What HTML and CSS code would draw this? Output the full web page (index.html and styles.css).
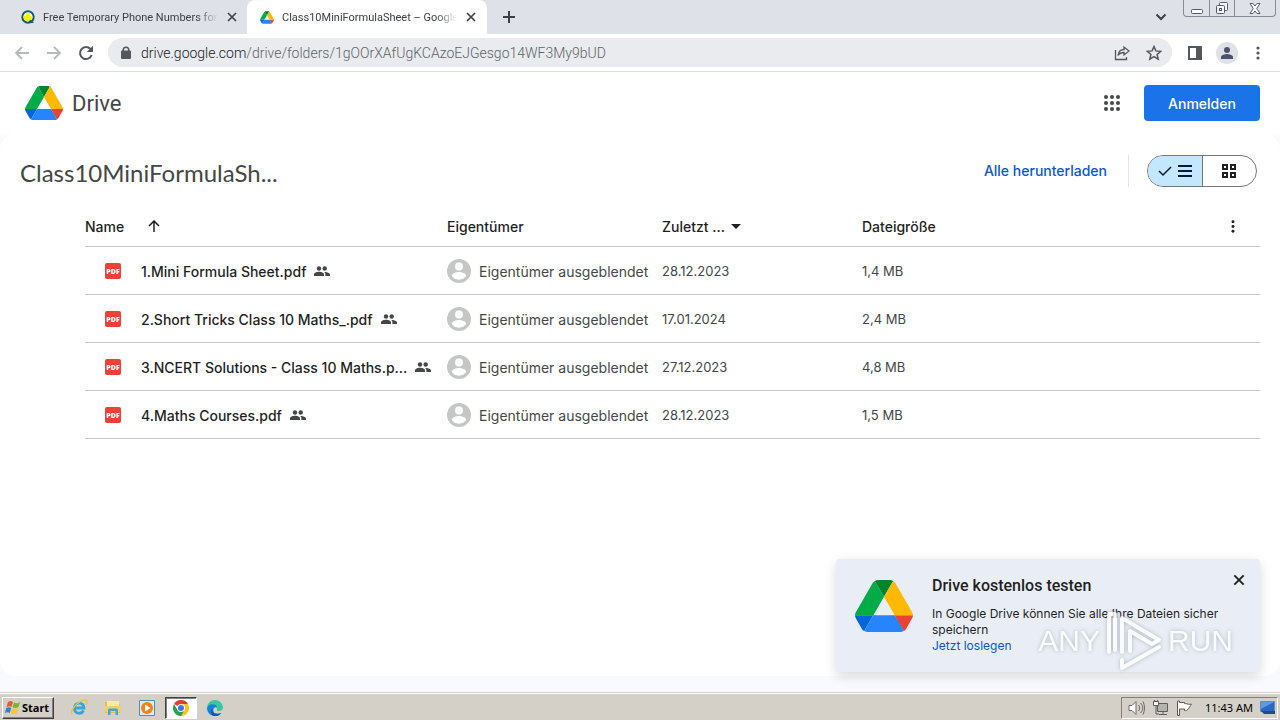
FILE: index.html
```html
<!DOCTYPE html>
<html lang="de">
<head>
<meta charset="utf-8">
<title>Class10MiniFormulaSheet – Google Drive</title>
<link rel="stylesheet" href="styles.css">
</head>
<body>
<svg class="defs" aria-hidden="true">
  <symbol id="drive" viewBox="0 0 87.3 78">
    <path fill="#0066da" d="m6.6 66.85 3.85 6.65c.8 1.4 1.95 2.5 3.3 3.3l13.75-23.8h-27.5c0 1.55.4 3.1 1.2 4.5z"/>
    <path fill="#00ac47" d="m43.65 25-13.75-23.8c-1.35.8-2.5 1.9-3.3 3.3l-25.4 44a9.06 9.06 0 0 0 -1.2 4.5h27.5z"/>
    <path fill="#ea4335" d="m73.55 76.8c1.35-.8 2.5-1.9 3.3-3.3l1.6-2.75 7.65-13.25c.8-1.4 1.2-2.95 1.2-4.5h-27.5l5.85 11.5z"/>
    <path fill="#00832d" d="m43.65 25 13.75-23.8c-1.35-.8-2.9-1.2-4.5-1.2h-18.5c-1.6 0-3.15.45-4.5 1.2z"/>
    <path fill="#2684fc" d="m59.8 53h-32.3l-13.75 23.8c1.35.8 2.9 1.2 4.5 1.2h50.8c1.6 0 3.15-.45 4.5-1.2z"/>
    <path fill="#ffba00" d="m73.4 26.5-12.7-22c-.8-1.4-1.95-2.5-3.3-3.3l-13.75 23.8 16.15 28h27.45c0-1.55-.4-3.1-1.2-4.5z"/>
  </symbol>
  <symbol id="close" viewBox="0 0 12 12"><path d="M2 2l8 8M10 2l-8 8" fill="none" stroke="currentColor" stroke-width="1.6"/></symbol>
  <symbol id="pdf" viewBox="0 0 16 16"><rect width="16" height="16" rx="2" fill="#ea4335"/><text x="8" y="10.5" text-anchor="middle" class="pdf-text">PDF</text></symbol>
  <symbol id="people" viewBox="0 0 16 10"><circle cx="5" cy="2.5" r="2.2"/><circle cx="10.7" cy="2.5" r="2.2"/><path d="M0 10V8.5C0 6.6 3 5.8 5 5.8s5 .8 5 2.7V10zM11 5.9c2.2.1 5 .9 5 2.6V10h-4.6V8.400c0-1-.4-1.800-1.200-2.400z"/></symbol>
  <symbol id="person" viewBox="0 0 20 20"><path fill-rule="evenodd" d="M10 0a10 10 0 1 0 0 20 10 10 0 0 0 0-20zm0 3a3.300 3.300 0 1 1 0 6.600A3.300 3.300 0 0 1 10 3zm0 14.200a7 7 0 0 1-6-3.200c0-2 4-3.100 6-3.100s6 1.100 6 3.100a7 7 0 0 1-6 3.200z"/></symbol>
  <symbol id="dots" viewBox="0 0 4 14"><circle cx="2" cy="2" r="1.6"/><circle cx="2" cy="7" r="1.6"/><circle cx="2" cy="12" r="1.6"/></symbol>
</svg>

<nav class="tabs" aria-label="Tabs">
  <div class="tab">
    <svg width="14" height="14" viewBox="0 0 14 14"><circle cx="7" cy="7" r="5.700" fill="#fff" stroke="#155a72" stroke-width="2"/><path d="M9 9l4 4H7z" fill="#155a72"/><path d="M2.500 8V6l2-.5 1-2.500 3.500.5v2.500l2.500.5-1 3-3 1.500H4.500z" fill="#f0f500"/></svg>
    <span class="tab-title">Free Temporary Phone Numbers for</span>
    <button class="icon" aria-label="Tab schließen"><svg width="12" height="12"><use href="#close"/></svg></button>
  </div>
  <div class="tab active">
    <svg width="14" height="13"><use href="#drive"/></svg>
    <span class="tab-title">Class10MiniFormulaSheet – Google D</span>
    <button class="icon" aria-label="Tab schließen"><svg width="12" height="12"><use href="#close"/></svg></button>
  </div>
  <button class="icon new-tab" aria-label="Neuer Tab"><svg width="12" height="12" viewBox="0 0 12 12"><path d="M6 0v12M0 6h12" stroke="currentColor" stroke-width="2"/></svg></button>
  <button class="icon tab-search" aria-label="Tabs suchen"><svg width="12" height="8" viewBox="0 0 12 8"><path d="M1.500 1.500L6 6l4.500-4.500" fill="none" stroke="currentColor" stroke-width="2"/></svg></button>
  <div class="window-buttons">
    <button aria-label="Minimieren"><svg width="12" height="14" viewBox="0 0 12 14"><rect x=".5" y="8.500" width="11" height="4" rx="1" fill="#fff" stroke="#555b66"/></svg></button>
    <button aria-label="Wiederherstellen"><svg width="14" height="14" viewBox="0 0 14 14" fill="#f5f6f8" stroke="#555b66"><rect x="4.500" y="1.500" width="8" height="8" rx="1"/><rect x="1.500" y="4.500" width="8" height="8" rx="1"/><rect x="4.500" y="7.500" width="2" height="2"/></svg></button>
    <button class="wide" aria-label="Schließen"><svg width="12" height="14" viewBox="0 0 12 14"><path d="M1 2.500h3l2 2.500 2-2.500h3L7.700 7.500l3.300 5H8L6 10l-2 2.500H1l3.300-5z" fill="#fff" stroke="#555b66"/></svg></button>
  </div>
</nav>

<div class="toolbar">
  <button class="icon faded" aria-label="Zurück"><svg width="16" height="16" viewBox="0 0 16 16"><path d="M15 8H2M8 2L2 8l6 6" fill="none" stroke="currentColor" stroke-width="1.800"/></svg></button>
  <button class="icon faded" aria-label="Vorwärts"><svg width="16" height="16" viewBox="0 0 16 16"><path d="M1 8h13M8 2l6 6-6 6" fill="none" stroke="currentColor" stroke-width="1.800"/></svg></button>
  <button class="icon" aria-label="Neu laden"><svg width="16" height="16" viewBox="0 0 16 16"><path d="M13.700 10A6 6 0 1 1 12.500 4" fill="none" stroke="currentColor" stroke-width="2"/><path d="M15 .8V7H8.800z"/></svg></button>
  <div class="address">
    <svg width="10" height="13" viewBox="0 0 10 13"><path fill-rule="evenodd" d="M1.500 4.500V4a3.500 3.500 0 0 1 7 0v.5H9a1 1 0 0 1 1 1V12a1 1 0 0 1-1 1H1a1 1 0 0 1-1-1V5.500a1 1 0 0 1 1-1zm1.500 0h4V4a2 2 0 0 0-4 0z"/></svg>
    <span class="url"><span class="host">drive.google.com</span>/drive/folders/1gOOrXAfUgKCAzoEJGesgo14WF3My9bUD</span>
    <button class="icon" aria-label="Teilen"><svg width="16" height="16" viewBox="0 0 16 16" fill="none" stroke="currentColor" stroke-width="1.300"><path d="M1.500 5v9.500h11V12"/><path d="M4 10.500c.5-4 2.500-6 6-6V2l5 4-5 4V7.500c-2.500 0-4.500.5-6 3z"/></svg></button>
    <button class="icon" aria-label="Lesezeichen"><svg width="16" height="16" viewBox="0 0 16 16"><path d="M8 1.500l1.900 4.400 4.800.4-3.600 3.200 1.100 4.700L8 11.700l-4.200 2.500 1.100-4.700-3.600-3.200 4.800-.4z" fill="none" stroke="currentColor" stroke-width="1.500"/></svg></button>
  </div>
  <button class="icon" aria-label="Seitenleiste"><svg width="14" height="14" viewBox="0 0 14 14"><path d="M1 1h12v12H1z" fill="none" stroke="currentColor" stroke-width="2"/><path d="M8 0h6v14H8z"/></svg></button>
  <button class="icon profile" aria-label="Profil"><svg width="12" height="12" viewBox="0 0 12 12"><circle cx="6" cy="3" r="3"/><path d="M0 12v-2c0-2 4-3 6-3s6 1 6 3v2z"/></svg></button>
  <button class="icon" aria-label="Menü"><svg width="4" height="14"><use href="#dots"/></svg></button>
</div>

<div class="page">
  <header class="app-header">
    <svg width="38" height="34"><use href="#drive"/></svg>
    <span class="brand">Drive</span>
    <button class="icon apps" aria-label="Google-Apps"><svg width="16" height="16" viewBox="0 0 16 16"><g id="r"><circle cx="2" cy="2" r="2"/><circle cx="8" cy="2" r="2"/><circle cx="14" cy="2" r="2"/></g><use href="#r" y="6"/><use href="#r" y="12"/></svg></button>
    <button class="sign-in">Anmelden</button>
  </header>

  <main class="content">
    <div class="folder-bar">
      <h1>Class10MiniFormulaSh...</h1>
      <button class="download">Alle herunterladen</button>
      <div class="view-switch">
        <button class="selected" aria-label="Listenlayout"><svg width="14" height="12" viewBox="0 0 14 12"><path d="M1 6l4 4 8-8" fill="none" stroke="currentColor" stroke-width="1.500"/></svg><svg width="14" height="12" viewBox="0 0 14 12"><path d="M0 1h14M0 6h14M0 11h14" stroke="currentColor" stroke-width="2"/></svg></button>
        <button aria-label="Rasterlayout"><svg width="14" height="14" viewBox="0 0 14 14" fill="none" stroke="currentColor" stroke-width="2"><path d="M1 1h4v4H1zM9 1h4v4H9zM1 9h4v4H1zM9 9h4v4H9z"/></svg></button>
      </div>
    </div>

    <table class="files">
      <colgroup><col class="c-name"><col class="c-owner"><col class="c-date"><col><col class="c-more"></colgroup>
      <thead>
        <tr>
          <th><span class="cell head-name">Name <svg width="12" height="12" viewBox="0 0 12 12"><path d="M6 12V1M1 6l5-5 5 5" fill="none" stroke="currentColor" stroke-width="1.500"/></svg></span></th>
          <th>Eigentümer</th>
          <th><span class="cell head-date">Zuletzt ... <svg width="10" height="5" viewBox="0 0 10 5"><path d="M0 0h10L5 5z"/></svg></span></th>
          <th>Dateigröße</th>
          <th><button class="icon" aria-label="Weitere Optionen"><svg width="4" height="13"><use href="#dots"/></svg></button></th>
        </tr>
      </thead>
      <tbody>
        <tr>
          <td><span class="cell file"><svg width="16" height="16"><use href="#pdf"/></svg><span class="file-name">1.Mini Formula Sheet.pdf</span><svg class="shared" width="16" height="10"><use href="#people"/></svg></span></td>
          <td><span class="cell owner"><svg width="24" height="24"><use href="#person"/></svg>Eigentümer ausgeblendet</span></td>
          <td class="value">28.12.2023</td><td class="value">1,4 MB</td><td></td>
        </tr>
        <tr>
          <td><span class="cell file"><svg width="16" height="16"><use href="#pdf"/></svg><span class="file-name">2.Short Tricks Class 10 Maths_.pdf</span><svg class="shared" width="16" height="10"><use href="#people"/></svg></span></td>
          <td><span class="cell owner"><svg width="24" height="24"><use href="#person"/></svg>Eigentümer ausgeblendet</span></td>
          <td class="value">17.01.2024</td><td class="value">2,4 MB</td><td></td>
        </tr>
        <tr>
          <td><span class="cell file"><svg width="16" height="16"><use href="#pdf"/></svg><span class="file-name">3.NCERT Solutions - Class 10 Maths.p...</span><svg class="shared" width="16" height="10"><use href="#people"/></svg></span></td>
          <td><span class="cell owner"><svg width="24" height="24"><use href="#person"/></svg>Eigentümer ausgeblendet</span></td>
          <td class="value">27.12.2023</td><td class="value">4,8 MB</td><td></td>
        </tr>
        <tr>
          <td><span class="cell file"><svg width="16" height="16"><use href="#pdf"/></svg><span class="file-name">4.Maths Courses.pdf</span><svg class="shared" width="16" height="10"><use href="#people"/></svg></span></td>
          <td><span class="cell owner"><svg width="24" height="24"><use href="#person"/></svg>Eigentümer ausgeblendet</span></td>
          <td class="value">28.12.2023</td><td class="value">1,5 MB</td><td></td>
        </tr>
      </tbody>
    </table>
  </main>

  <aside class="promo">
    <svg width="58" height="54"><use href="#drive"/></svg>
    <div class="promo-body">
      <h2>Drive kostenlos testen</h2>
      <p>In Google Drive können Sie alle Ihre Dateien sicher speichern</p>
      <a href="#start">Jetzt loslegen</a>
    </div>
    <button class="icon promo-close" aria-label="Schließen"><svg width="14" height="14"><use href="#close"/></svg></button>
  </aside>
  <div class="watermark"><span>ANY</span><svg width="58" height="62" viewBox="0 0 58 62" fill="none" stroke="#fff" stroke-width="4" stroke-linejoin="round" stroke-linecap="round"><path d="M4 42V4h6v36M17 42V8l37 22-7 4L25 21v20M17 50v8l37-21"/></svg><span>RUN</span></div>
</div>

<footer class="taskbar">
  <button class="start"><svg width="16" height="15" viewBox="0 0 16 15"><path d="M3 2c2-1.500 3.500-1 5 0L6.500 7C5 6 3.500 6 1.500 7z" fill="#e8582c"/><path d="M9 2.500c2 1 4 1 6-.5l-1.500 5c-2 1.300-4 1.300-6 .2z" fill="#76b82a"/><path d="M1.200 8c2-1.200 3.500-1 5 0l-1.400 5C3.500 12 2 12 0 13z" fill="#2f83d6"/><path d="M7.200 8.500c2 1 4 1 6-.3l-1.400 5c-2 1.200-4 1.200-6 .1z" fill="#fbc62c"/></svg>Start</button>
  <div class="launchers">
    <button aria-label="Internet Explorer"><svg width="18" height="17" viewBox="0 0 18 17" fill="none"><path d="M4.500 9h9.500c0-6.500-9.500-6.500-9.500 0s7 6.500 9 2.500" stroke="#35a6dd" stroke-width="2.800"/><path d="M2 15.500C-1 11 11-1 16.500 1.500c1.500 1 .3 3-.5 4" stroke="#eec33b" stroke-width="1.400"/></svg></button>
    <button aria-label="Explorer"><svg width="18" height="17" viewBox="0 0 18 17"><path d="M1 3h6l1 2h8v9H1z" fill="#e5bd4c"/><path d="M3 2h12v5H3z" fill="#fae9a7"/><path d="M1 7h16v6H1z" fill="#f0d06a"/><path d="M4 16v-5q0-1.500 1.500-1.500h7q1.500 0 1.500 1.500v5h-2.500v-4h-5v4z" fill="#4ba3d2"/></svg></button>
    <button aria-label="Media Player"><svg width="16" height="16" viewBox="0 0 16 16"><path d="M.5.500h15v15H.5z" fill="#d8edf8" stroke="#4a91c0"/><circle cx="8" cy="8" r="6" fill="#f58213"/><path d="M6 4.500v7L11.500 8z" fill="#fff"/></svg></button>
    <button class="running" aria-label="Google Chrome"><svg width="16" height="16" viewBox="0 0 16 16"><path d="M8 8L1.070 4A8 8 0 0 1 14.930 4z" fill="#e33b2e"/><path d="M8 8V4h6.930A8 8 0 0 1 8 16z" fill="#fcc31e"/><path d="M8 8v0L8 16A8 8 0 0 1 1.070 4L4.500 10z" fill="#2da04c"/><path d="M4.500 10L8 16 11 11z" fill="#2da04c"/><circle cx="8" cy="8" r="4" fill="#fff"/><circle cx="8" cy="8" r="3" fill="#3b78e7"/></svg></button>
    <button aria-label="Microsoft Edge"><svg width="16" height="16" viewBox="0 0 16 16"><path d="M8 0a8 8 0 0 1 8 7c0 3-2 4-4.500 4-1.500 0-2-1-1.500-2C10 6 5 4 0 8a8 8 0 0 1 8-8z" fill="#3cc6a0"/><path d="M0 8c1-5 10-5 10-.5C5 6 4.500 15 12 13.500l2-.5c-2 3-5 3.500-7.500 3A8 8 0 0 1 0 8z" fill="#1681d5"/><path d="M6 8c-2 4 1 7.500 8 5-2 3-5 3.500-7.500 3C3 14 3 10 6 8z" fill="#1458a8"/></svg></button>
  </div>
  <div class="tray">
    <svg width="17" height="16" viewBox="0 0 17 16" fill="none" stroke="#6b6a66"><path d="M1 5.500h3l4-4v13l-4-4H1z" fill="#fff"/><path d="M10.500 5c1.500 2 1.500 4 0 6M12.500 3c3 3 3 7 0 10M15 1.500c2 4 2 9 0 13"/></svg>
    <svg width="17" height="16" viewBox="0 0 17 16" fill="none" stroke="#5e5d5a"><path d="M5.500 3.500h10v8h-10z" fill="#b5b3af"/><path d="M1.500 1.500h5v4h-5z" fill="#fff"/><path d="M7 14.500h8M11 12v2M4 6v8h3M2.500 0v2M5.500 0v2"/></svg>
    <svg width="17" height="16" viewBox="0 0 17 16" fill="#fff" stroke="#5e5d5a"><path d="M1.500 1v14.500h2V9h5v1.500c3 1 4-2 7-6.500-3 1-4-.5-7-.5v-1h-5V1z"/></svg>
    <time>11:43 AM</time>
    <svg width="15" height="13" viewBox="0 0 15 13"><path d="M.5.500h14v10H.5z" fill="#2b68bf" stroke="#5d8cc7"/><path d="M1 1h13L1 8z" fill="#5a9be0"/><path d="M1 10h14v3H4z" fill="#214c88"/></svg>
  </div>
</footer>
</body>
</html>
```
FILE: styles.css
```css
* { box-sizing: border-box; }

body {
  margin: 0;
  min-height: 100vh;
  display: flex;
  flex-direction: column;
  font-family: Inter, "Open Sans", sans-serif;
  font-size: 14px;
  color: #1f1f1f;
  background: #fff;
}

svg { flex: none; display: block; }
svg:not([fill]) { fill: currentColor; }
.defs { position: absolute; width: 0; height: 0; }
button { font: inherit; color: inherit; border: 0; padding: 0; background: none; }
.icon { display: flex; align-items: center; justify-content: center; flex: none; }

/* Browser tabs */
.tabs {
  display: flex;
  height: 34px;
  background: #dee1e8;
  color: #3c4043;
  font-family: Roboto, sans-serif;
  font-size: 11px;
}
.tab {
  display: flex;
  align-items: center;
  gap: 8px;
  width: 247px;
  padding: 0 9px 0 21px;
}
.tab.active {
  width: 240px;
  padding: 0 10px 0 13px;
  background: #fff;
  border-radius: 8px 8px 0 0;
}
.tab-title {
  flex: 1;
  min-width: 0;
  overflow: hidden;
  white-space: nowrap;
  mask-image: linear-gradient(to right, #000 88%, transparent);
}
.new-tab { width: 44px; }
.tab-search { margin-left: auto; width: 44px; }
.window-buttons {
  display: flex;
  align-self: flex-start;
  margin-right: 4px;
  border: 1px solid #858b98;
  border-top: 0;
  border-radius: 0 0 4px 4px;
}
.window-buttons button {
  width: 25px;
  height: 16px;
  display: flex;
  align-items: center;
  justify-content: center;
}
.window-buttons button + button { border-left: 1px solid #858b98; }
.window-buttons .wide { width: 41px; }

/* Address bar */
.toolbar {
  display: flex;
  align-items: center;
  gap: 16px;
  height: 38px;
  padding: 0 20px 0 14px;
  border-bottom: 1px solid #dadce0;
  color: #54575b;
}
.faded { color: #b7b9bc; }
.address {
  flex: 1;
  min-width: 0;
  display: flex;
  align-items: center;
  gap: 16px;
  height: 29px;
  margin-left: -2px;
  padding: 0 10px 0 13px;
  border-radius: 15px;
  background: #e9ebee;
}
.url {
  flex: 1;
  min-width: 0;
  margin-left: -6px;
  overflow: hidden;
  white-space: nowrap;
  font-family: Roboto, sans-serif;
  font-weight: 300;
  color: #5f6368;
}
.host { color: #202124; }
.profile {
  width: 22px;
  height: 22px;
  margin: 0 2px 0 -2px;
  border-radius: 50%;
  background: #dee1e6;
  color: #4a5470;
}

/* Drive page */
.page {
  flex: 1;
  position: relative;
  display: flex;
  flex-direction: column;
  padding-bottom: 16px;
  background: linear-gradient(#fff 60px, #f8fafd 66px);
}
.app-header {
  display: flex;
  align-items: center;
  height: 62px;
  padding: 0 20px 0 25px;
}
.brand { margin-left: 9px; font-size: 22px; color: #444746; font-family: Roboto, sans-serif; }
.apps { margin-left: auto; color: #444746; }
.sign-in {
  width: 116px;
  height: 36px;
  margin-left: 24px;
  border-radius: 4px;
  background: #1a73e8;
  color: #fff;
  font-weight: 500;
}
.content {
  flex: 1;
  padding: 16px 20px 0;
  border-radius: 16px;
  background: #fff;
}
.folder-bar { display: flex; align-items: flex-start; height: 44px; padding-top: 5px; }
h1 {
  margin: 0 auto 0 0;
  font-family: Lato, sans-serif;
  font-size: 24px;
  line-height: 36px;
  font-weight: 400;
  color: #444746;
}
.download {
  height: 32px;
  padding: 0 21px 2px 0;
  border-right: 1px solid #e3e3e3;
  color: #0b57d0;
  font-weight: 500;
}
.view-switch {
  display: flex;
  width: 110px;
  height: 32px;
  margin: 0 3px 0 18px;
  overflow: hidden;
  border: 1px solid #747775;
  border-radius: 16px;
}
.view-switch button {
  flex: 1;
  display: flex;
  align-items: center;
  justify-content: center;
  gap: 6px;
}
.view-switch .selected { background: #c2e7ff; border-right: 1px solid #747775; color: #001d35; }

.files {
  width: calc(100% - 65px);
  margin: 13px 0 0 65px;
  table-layout: fixed;
  border-collapse: collapse;
}
.c-name { width: 362px; }
.c-owner { width: 215px; }
.c-date { width: 200px; }
.c-more { width: 52px; }
.files th, .files td {
  height: 48px;
  padding: 2px 0 0;
  border-bottom: 1px solid #c7c7c7;
  text-align: left;
  white-space: nowrap;
  font-weight: 400;
  color: #444746;
}
.files th { height: 39px; padding: 0; font-weight: 500; color: #1f1f1f; }
.files th .icon { margin-left: 23px; }
.files .value { font-size: 13px; }
.cell { display: flex; align-items: center; }
.head-name { gap: 24px; }
.head-date { gap: 6px; }
.file { padding-left: 20px; }
.file-name { margin: 0 8px 0 20px; font-weight: 500; color: #1f1f1f; }
.shared { color: #444746; }
.owner { gap: 8px; }
.owner svg { color: #c4c7c5; }
.pdf-text { fill: #fff; font: 800 7px "Open Sans", sans-serif; }

/* Promotion card */
.promo {
  position: absolute;
  right: 20px;
  bottom: 20px;
  width: 424px;
  height: 113px;
  display: flex;
  padding: 20px 14px 0 19px;
  border-radius: 4px;
  background: #e9eef6;
  box-shadow: 0 4px 12px rgba(60, 64, 67, .2);
}
.promo-body { flex: 1; margin-left: 19px; font-size: 12px; line-height: 16px; }
.promo h2 {
  margin: -3px 0 10px;
  font-family: Roboto, sans-serif;
  font-size: 16px;
  line-height: 20px;
  font-weight: 500;
}
.promo p { margin: 0; }
.promo a { color: #0b57d0; text-decoration: none; }
.promo-close { align-self: flex-start; margin-top: -6px; }

.watermark {
  position: absolute;
  right: 47px;
  bottom: 20px;
  display: flex;
  align-items: center;
  gap: 5px;
  color: #fff;
  font: 30px "Liberation Sans", sans-serif;
  opacity: .8;
  pointer-events: none;
  filter: drop-shadow(0 0 2px rgba(110, 115, 130, .6));
}

/* Windows taskbar */
.taskbar {
  display: flex;
  align-items: center;
  height: 28px;
  padding: 2px 2px 0 2px;
  border-top: 1px solid #d4d0c8;
  background: #d4d0c8;
  box-shadow: inset 0 1px #fff;
  color: #000;
  font-family: "Noto Sans", sans-serif;
  font-size: 11px;
}
.start {
  display: flex;
  align-items: center;
  gap: 1px;
  width: 52px;
  height: 22px;
  padding-left: 2px;
  border: 1px solid;
  border-color: #fff #404040 #404040 #fff;
  box-shadow: inset -1px -1px #808080;
  font-weight: 700;
}
.launchers { display: flex; gap: 2px; margin-left: 9px; }
.launchers button {
  width: 32px;
  height: 22px;
  display: flex;
  align-items: center;
  justify-content: center;
}
.launchers .running {
  border: 1px solid;
  border-color: #404040 #fff #fff #404040;
  background: #fff;
  box-shadow: inset 1px 1px #808080;
}
.tray {
  display: flex;
  align-items: center;
  gap: 7px;
  height: 22px;
  margin-left: auto;
  padding: 0 2px 0 6px;
  border: 1px solid;
  border-color: #808080 #fff #fff #808080;
}
.tray time { margin-left: 5px; white-space: nowrap; }
```
